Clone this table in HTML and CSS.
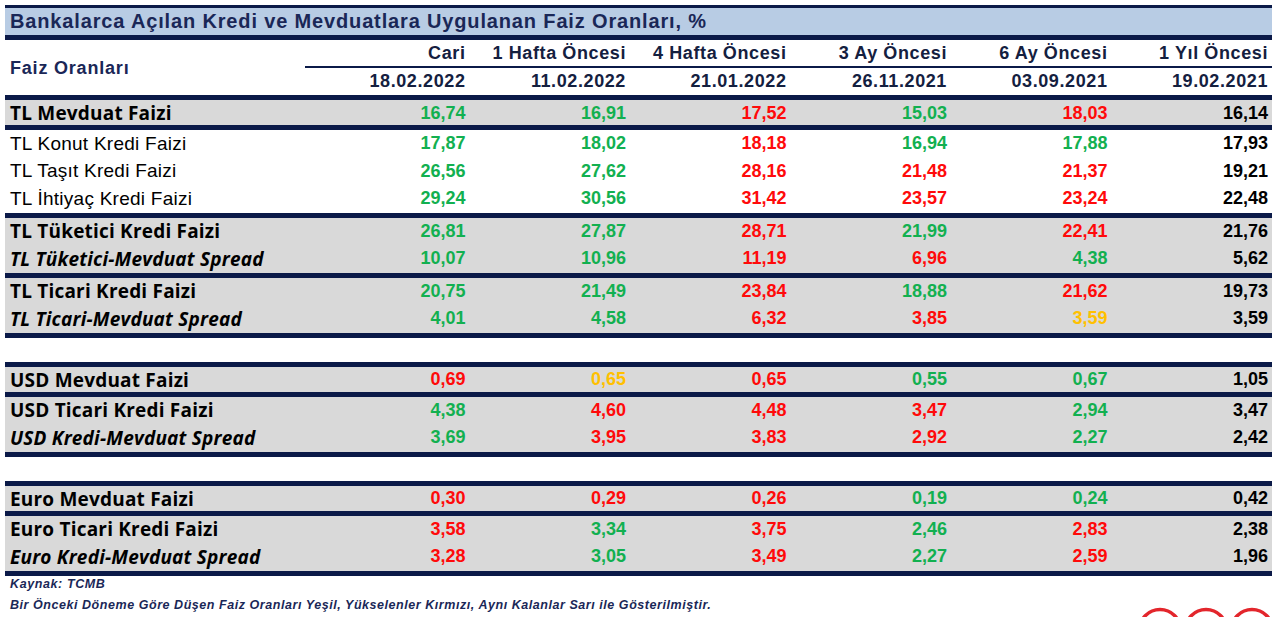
FILE: index.html
```html
<!DOCTYPE html>
<html lang="tr">
<head>
<meta charset="utf-8">
<title>Faiz Oranları</title>
<link rel="stylesheet" href="styles.css">
</head>
<body>
<div class="report">
  <div class="rule rule-thin"></div>
  <div class="title">Bankalarca Açılan Kredi ve Mevduatlara Uygulanan Faiz Oranları, %</div>
  <div class="rule"></div>

  <div class="head">
    <div class="head-label">Faiz Oranları</div>
    <div class="head-cols">
      <div class="head-row">
        <span>Cari</span><span>1 Hafta Öncesi</span><span>4 Hafta Öncesi</span><span>3 Ay Öncesi</span><span>6 Ay Öncesi</span><span>1 Yıl Öncesi</span>
      </div>
      <div class="head-line"></div>
      <div class="head-row dates">
        <span>18.02.2022</span><span>11.02.2022</span><span>21.01.2022</span><span>26.11.2021</span><span>03.09.2021</span><span>19.02.2021</span>
      </div>
    </div>
  </div>
  <div class="rule"></div>

  <div class="group gray">
    <div class="row short"><span class="label strong">TL Mevduat Faizi</span><span class="g">16,74</span><span class="g">16,91</span><span class="r">17,52</span><span class="g">15,03</span><span class="r">18,03</span><span class="k">16,14</span></div>
  </div>
  <div class="rule"></div>

  <div class="group">
    <div class="row"><span class="label">TL Konut Kredi Faizi</span><span class="g">17,87</span><span class="g">18,02</span><span class="r">18,18</span><span class="g">16,94</span><span class="g">17,88</span><span class="k">17,93</span></div>
    <div class="row"><span class="label">TL Taşıt Kredi Faizi</span><span class="g">26,56</span><span class="g">27,62</span><span class="r">28,16</span><span class="r">21,48</span><span class="r">21,37</span><span class="k">19,21</span></div>
    <div class="row"><span class="label">TL İhtiyaç Kredi Faizi</span><span class="g">29,24</span><span class="g">30,56</span><span class="r">31,42</span><span class="r">23,57</span><span class="r">23,24</span><span class="k">22,48</span></div>
  </div>
  <div class="rule"></div>

  <div class="group gray">
    <div class="row"><span class="label strong">TL Tüketici Kredi Faizi</span><span class="g">26,81</span><span class="g">27,87</span><span class="r">28,71</span><span class="g">21,99</span><span class="r">22,41</span><span class="k">21,76</span></div>
    <div class="row"><span class="label strong italic">TL Tüketici-Mevduat Spread</span><span class="g">10,07</span><span class="g">10,96</span><span class="r">11,19</span><span class="r">6,96</span><span class="g">4,38</span><span class="k">5,62</span></div>
  </div>
  <div class="rule"></div>

  <div class="group gray">
    <div class="row"><span class="label strong">TL Ticari Kredi Faizi</span><span class="g">20,75</span><span class="g">21,49</span><span class="r">23,84</span><span class="g">18,88</span><span class="r">21,62</span><span class="k">19,73</span></div>
    <div class="row"><span class="label strong italic">TL Ticari-Mevduat Spread</span><span class="g">4,01</span><span class="g">4,58</span><span class="r">6,32</span><span class="r">3,85</span><span class="y">3,59</span><span class="k">3,59</span></div>
  </div>
  <div class="rule"></div>

  <div class="gap"></div>

  <div class="rule"></div>
  <div class="group gray">
    <div class="row short"><span class="label strong">USD Mevduat Faizi</span><span class="r">0,69</span><span class="y">0,65</span><span class="r">0,65</span><span class="g">0,55</span><span class="g">0,67</span><span class="k">1,05</span></div>
  </div>
  <div class="rule"></div>
  <div class="group gray">
    <div class="row"><span class="label strong">USD Ticari Kredi Faizi</span><span class="g">4,38</span><span class="r">4,60</span><span class="r">4,48</span><span class="r">3,47</span><span class="g">2,94</span><span class="k">3,47</span></div>
    <div class="row"><span class="label strong italic">USD Kredi-Mevduat Spread</span><span class="g">3,69</span><span class="r">3,95</span><span class="r">3,83</span><span class="r">2,92</span><span class="g">2,27</span><span class="k">2,42</span></div>
  </div>
  <div class="rule"></div>

  <div class="gap"></div>

  <div class="rule"></div>
  <div class="group gray">
    <div class="row short"><span class="label strong">Euro Mevduat Faizi</span><span class="r">0,30</span><span class="r">0,29</span><span class="r">0,26</span><span class="g">0,19</span><span class="g">0,24</span><span class="k">0,42</span></div>
  </div>
  <div class="rule"></div>
  <div class="group gray">
    <div class="row"><span class="label strong">Euro Ticari Kredi Faizi</span><span class="r">3,58</span><span class="g">3,34</span><span class="r">3,75</span><span class="g">2,46</span><span class="r">2,83</span><span class="k">2,38</span></div>
    <div class="row"><span class="label strong italic">Euro Kredi-Mevduat Spread</span><span class="r">3,28</span><span class="g">3,05</span><span class="r">3,49</span><span class="g">2,27</span><span class="r">2,59</span><span class="k">1,96</span></div>
  </div>
  <div class="rule"></div>

  <div class="source">Kaynak: TCMB</div>
  <div class="foot">
    <div class="note">Bir Önceki Döneme Göre Düşen Faiz Oranları Yeşil, Yükselenler Kırmızı, Aynı Kalanlar Sarı ile Gösterilmiştir.</div>
    <svg class="logo" width="138" height="10" viewBox="0 0 138 10" aria-hidden="true">
      <circle cx="23" cy="23" r="20.5" fill="none" stroke="#e3262c" stroke-width="3.5"/>
      <circle cx="69" cy="23" r="20.5" fill="none" stroke="#e3262c" stroke-width="3.5"/>
      <circle cx="115" cy="23" r="20.5" fill="none" stroke="#e3262c" stroke-width="3.5"/>
    </svg>
  </div>
</div>
</body>
</html>
```
FILE: styles.css
```css
html, body {
  margin: 0;
  padding: 0;
  background: #ffffff;
  overflow: hidden;
}

body {
  font-family: "Liberation Sans", Arial, sans-serif;
  color: #000;
}

.report {
  width: 1267px;
  margin-left: 5px;
  padding-top: 5px;
}

.rule {
  height: 5px;
  background: #0b1a48;
}

.rule-thin {
  height: 3px;
}

.title {
  height: 27px;
  line-height: 27px;
  background: #b8cce4;
  padding-left: 5px;
  font-weight: 700;
  font-size: 20px;
  letter-spacing: 0.85px;
  color: #1a2757;
  white-space: nowrap;
}

.head {
  display: grid;
  grid-template-columns: 300px 1fr;
  height: 55px;
  color: #14203f;
}

.head-label {
  align-self: center;
  padding-left: 5px;
  font-weight: 700;
  font-size: 18px;
  letter-spacing: 0.8px;
  color: #1a2757;
  padding-top: 2px;
}

.head-cols {
  display: flex;
  flex-direction: column;
}

.head-row {
  display: grid;
  grid-template-columns: repeat(6, 1fr);
  padding-right: 4px;
  height: 26px;
  align-items: center;
  font-weight: 700;
  font-size: 18px;
  letter-spacing: 0.6px;
  text-align: right;
}

.head-row.dates {
  height: 27px;
}

.head-line {
  height: 2px;
  background: #0b1a48;
}

.group.gray {
  background: #d9d9d9;
}

.row {
  display: grid;
  grid-template-columns: 300px repeat(6, 1fr);
  padding-right: 4px;
  height: 27.5px;
  align-items: center;
  text-align: right;
  font-weight: 700;
  font-size: 18px;
}

.row.short {
  height: 25px;
}

.label {
  text-align: left;
  padding-left: 5px;
  font-weight: 400;
  font-size: 19px;
  letter-spacing: 0.25px;
  white-space: nowrap;
}

.label.strong {
  font-family: "Open Sans", "Liberation Sans", sans-serif;
  font-weight: 700;
  font-size: 19px;
  letter-spacing: 0.2px;
}

.label.italic {
  font-style: italic;
}

.g { color: #12b050; }
.r { color: #ff0a0a; }
.y { color: #ffc000; }
.k { color: #000000; }

.gap {
  height: 24px;
}

.source {
  padding: 1px 0 0 5px;
  height: 16px;
  font-size: 12.5px;
  font-weight: 700;
  font-style: italic;
  letter-spacing: 0.6px;
  color: #1a2757;
}

.foot {
  display: flex;
  justify-content: space-between;
  align-items: flex-start;
  padding-top: 5px;
}

.note {
  padding-left: 5px;
  font-size: 12.5px;
  font-weight: 700;
  font-style: italic;
  color: #1a2757;
  letter-spacing: 0.55px;
  white-space: nowrap;
}

.logo {
  display: block;
  margin-top: 9px;
  margin-right: -3px;
}
```
